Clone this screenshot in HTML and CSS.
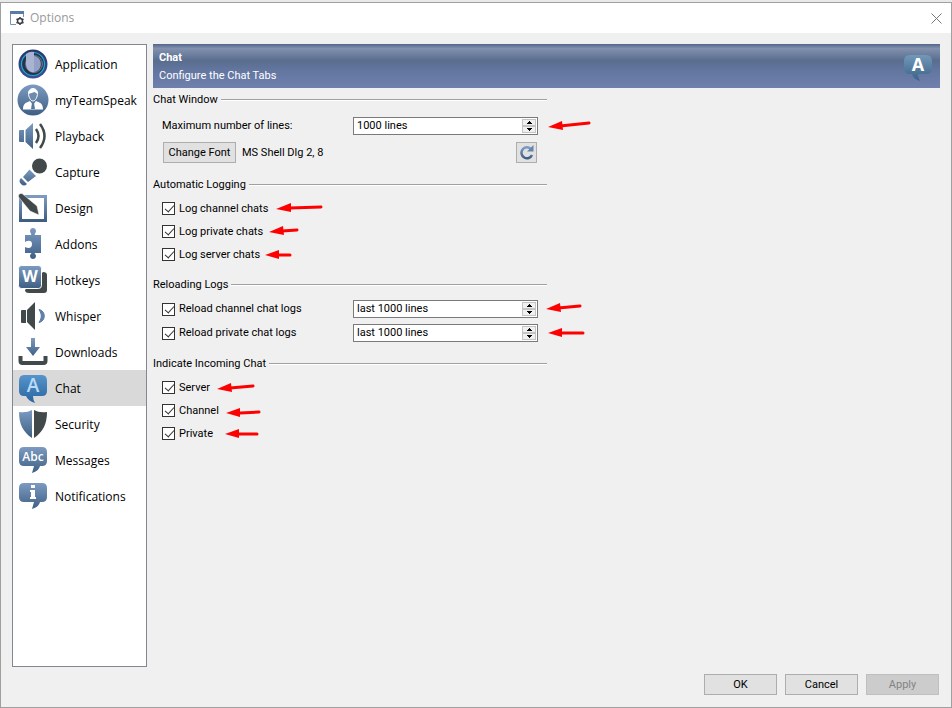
FILE: index.html
```html
<!DOCTYPE html>
<html lang="en">
<head>
<meta charset="utf-8">
<title>Options</title>
<link rel="stylesheet" href="styles.css">
</head>
<body>
<svg class="defs" width="0" height="0" aria-hidden="true">
  <defs>
    <linearGradient id="steel" x1="0" y1="0" x2="0" y2="1"><stop offset="0" stop-color="#7d9bc2"/><stop offset="1" stop-color="#3e5f83"/></linearGradient>
    <linearGradient id="blue" x1="0" y1="0" x2="0" y2="1"><stop offset="0" stop-color="#5794cb"/><stop offset="1" stop-color="#28659f"/></linearGradient>
    <linearGradient id="teal" x1="0" y1="0" x2="0" y2="1"><stop offset="0" stop-color="#7298b9"/><stop offset="1" stop-color="#3a6286"/></linearGradient>
    <linearGradient id="orb" x1="0" y1="0" x2="0" y2="1"><stop offset="0" stop-color="#27376a"/><stop offset="1" stop-color="#3c4f98"/></linearGradient>
    <symbol id="spin-up" viewBox="0 0 5 3"><path d="M2 0h1v1h1v1h1v1H0V2h1V1h1z"/></symbol>
    <symbol id="spin-down" viewBox="0 0 5 3"><path d="M0 0h5v1H4v1H3v1H2V2H1V1H0z"/></symbol>
  </defs>
</svg>
<div class="window">
  <header class="titlebar">
    <svg class="app-icon" width="15" height="15" viewBox="0 0 15 15">
      <path d="M.5 2v11.500H6M13.500 2v4" fill="none" stroke="#7893b0"/><path d="M0 0h14v3H0z" fill="#587ca3"/>
      <circle cx="10" cy="10" r="2.500" fill="none" stroke="#3b4146" stroke-width="1.500"/>
      <path d="M10 6v1.500M10 12.500V14M6.500 8l1.500.8M12 11.200l1.500.8M6.500 12l1.500-.8M12 8.800l1.500-.8" stroke="#3b4146" stroke-width="1.500"/>
    </svg>
    <h1 class="title">Options</h1>
    <button class="close" type="button" aria-label="Close"><svg width="11" height="11" viewBox="0 0 11 11"><path d="M.5.5l10 10M10.500.5l-10 10" stroke="#777" fill="none"/></svg></button>
  </header>
  <div class="body">
    <nav class="sidebar">
      <a class="item" href="#application"><svg viewBox="0 0 32 32"><circle cx="16" cy="16" r="14.500" fill="url(#orb)"/><circle cx="16" cy="16" r="11.500" fill="#26324f" stroke="#1bb0cb" stroke-width="1.200"/><circle cx="17" cy="16" r="8.500" fill="#3a4a68" stroke="#66788f"/><path d="M9 6q4-3 8-2v20c-3 1-8-2-8-8z" fill="#a9b3d4"/><path d="M17 8c9 1 9 15 0 16z" fill="#949fc6"/></svg>Application</a>
      <a class="item" href="#myteamspeak"><svg viewBox="0 0 32 32"><circle cx="16" cy="16" r="15.500" fill="url(#steel)"/><path d="M6 25.500c0-5.500 2-6.500 7-8.500l3 4 3-4c5 2 7 3 7 8.500z" fill="#fff"/><path d="M11.500 9c0-6 9-6 9 0 0 4-2 8-4.500 8s-4.500-4-4.500-8z" fill="#6e8bad" stroke="#fff"/><path d="M11.500 10c0-7 9-7 9 0-2-1-2-2-3-2-2 1-4 1-6 2z" fill="#fff"/><path d="M15 19h2l1 6h-4z" fill="#587899"/></svg>myTeamSpeak</a>
      <a class="item" href="#playback"><svg viewBox="0 0 32 32"><path d="M3 10h4v12H3q-1 0-1-1V11q0-1 1-1zM8.500 10L16 3v26l-7.500-7z" fill="url(#steel)"/><path d="M19 9q5 7 0 14M23 4q9 12 0 24" fill="none" stroke="#42494b" stroke-width="2.500"/></svg>Playback</a>
      <a class="item" href="#capture"><svg viewBox="0 0 32 32"><circle cx="22.500" cy="10" r="7.500" fill="#42494b"/><path d="M12.500 13.500l6.500 6.500-8 6-5-5zM4 22l6 6q-3 3-6 0-3-3 0-6z" fill="url(#steel)"/></svg>Capture</a>
      <a class="item" href="#design"><svg viewBox="0 0 32 32"><path d="M3.500 4.500h25v24h-25z" fill="#fff" stroke="url(#steel)" stroke-width="3"/><path d="M1.500 5Q1 1 5 1.500L20 14l2 9-9-4z" fill="#42494b" stroke="#fff" stroke-width=".5"/></svg>Design</a>
      <a class="item" href="#addons"><svg viewBox="0 0 32 32"><path d="M8 7h6c1-1-1-2-1-4 0-4 6-4 6 0 0 2-2 3-1 4h6v18h-6c-1 1 1 1 1 3 0 4-6 4-6 0 0-2 2-2 1-3H8v-6c4 2 7 1 7-3s-4-4-7-2z" fill="url(#steel)"/></svg>Addons</a>
      <a class="item" href="#hotkeys"><svg viewBox="0 0 32 32"><path d="M26 8q4 0 4 3v15q0 3-3 3H12q-4 0-4-3z" fill="#42494b"/><rect x="1.500" y="1.500" width="23" height="23" rx="3" fill="url(#steel)" stroke="#fff"/><text x="13" y="18" class="glyph bold" font-size="16">W</text></svg>Hotkeys</a>
      <a class="item" href="#whisper"><svg viewBox="0 0 32 32"><path d="M5 10h4v13H5q-1 0-1-1V11q0-1 1-1zM10 10l8-8v28l-8-8z" fill="#42494b"/><path d="M22 9.500c7 1 7 12 0 13 3-5 3-8 0-13z" fill="#5f80aa" stroke="#5f80aa"/></svg>Whisper</a>
      <a class="item" href="#downloads"><svg viewBox="0 0 32 32"><path d="M14 2h4v9h5l-7 9-7-9h5z" fill="url(#steel)"/><path d="M3.500 20v5q0 2 2 2h21q2 0 2-2v-5" fill="none" stroke="#42494b" stroke-width="4"/></svg>Downloads</a>
      <a class="item selected" href="#chat" aria-current="page"><svg viewBox="0 0 32 32"><path d="M7 3h18q5 0 5 6v10q0 5-5 5h-9q0 4 2 7-7-2-9-7H7q-5 0-5-5V9q0-6 5-6z" fill="url(#blue)"/><text x="16" y="20" class="glyph pale" font-size="19">A</text></svg>Chat</a>
      <a class="item" href="#security"><svg viewBox="0 0 32 32"><path d="M15 2v28C6 24 2 16 2 4q8 1 13-2z" fill="url(#steel)"/><path d="M17 2v28c9-6 13-14 13-26q-8 1-13-2z" fill="#42494b"/></svg>Security</a>
      <a class="item" href="#messages"><svg viewBox="0 0 32 32"><path d="M7 3h18q5 0 5 5v9q0 5-5 5h-2q-1 5-8 7l2-7H7q-5 0-5-5V8q0-5 5-5z" fill="url(#steel)"/><text x="16" y="17" class="glyph" font-size="12">Abc</text></svg>Messages</a>
      <a class="item" href="#notifications"><svg viewBox="0 0 32 32"><path d="M7 3h18q5 0 5 5v9q0 5-5 5h-2q-1 5-8 7l2-7H7q-5 0-5-5V8q0-5 5-5z" fill="url(#steel)"/><path d="M14 5h4v3h-4zM13 10h5v7h1v2h-6v-2h1v-5h-1z" fill="#fff"/></svg>Notifications</a>
    </nav>
    <main class="content">
      <div class="banner">
        <div><h2>Chat</h2><p>Configure the Chat Tabs</p></div>
        <svg width="32" height="32" viewBox="0 0 32 32"><path d="M8 4h16q6 0 6 6v7q0 6-6 6h-8q0 4 2 7-7-2-8-7H8q-6 0-6-6v-7q0-6 6-6z" fill="url(#teal)"/><text x="16" y="20" class="glyph bold" font-size="18">A</text></svg>
      </div>
      <form class="settings">
        <section class="group roomy">
          <h3>Chat Window</h3>
          <div class="row"><label class="name" for="max-lines">Maximum number of lines:</label>
            <span class="spin"><input id="max-lines" type="text" value="1000 lines"><span class="steps"><button type="button" aria-label="Increase"><svg width="5" height="3"><use href="#spin-up"/></svg></button><button type="button" aria-label="Decrease"><svg width="5" height="3"><use href="#spin-down"/></svg></button></span></span></div>
          <div class="row"><button class="font-button" type="button">Change Font</button><span class="font-name">MS Shell Dlg 2, 8</span>
            <button class="reset" type="button" aria-label="Reset font"><svg width="15" height="15" viewBox="0 0 15 15"><path d="M11.500 3.500A5.500 5.500 0 1 0 13 10" fill="none" stroke="url(#steel)" stroke-width="2.500"/><path d="M14.500 0v6.500H8z" fill="#6485ad"/></svg></button></div>
        </section>
        <section class="group">
          <h3>Automatic Logging</h3>
          <div class="row"><label><input type="checkbox" checked>Log channel chats</label></div>
          <div class="row"><label><input type="checkbox" checked>Log private chats</label></div>
          <div class="row"><label><input type="checkbox" checked>Log server chats</label></div>
        </section>
        <section class="group medium">
          <h3>Reloading Logs</h3>
          <div class="row"><label><input type="checkbox" checked>Reload channel chat logs</label>
            <span class="spin"><input type="text" value="last 1000 lines" aria-label="Channel chat lines"><span class="steps"><button type="button" aria-label="Increase"><svg width="5" height="3"><use href="#spin-up"/></svg></button><button type="button" aria-label="Decrease"><svg width="5" height="3"><use href="#spin-down"/></svg></button></span></span></div>
          <div class="row"><label><input type="checkbox" checked>Reload private chat logs</label>
            <span class="spin"><input type="text" value="last 1000 lines" aria-label="Private chat lines"><span class="steps"><button type="button" aria-label="Increase"><svg width="5" height="3"><use href="#spin-up"/></svg></button><button type="button" aria-label="Decrease"><svg width="5" height="3"><use href="#spin-down"/></svg></button></span></span></div>
        </section>
        <section class="group">
          <h3>Indicate Incoming Chat</h3>
          <div class="row"><label><input type="checkbox" checked>Server</label></div>
          <div class="row"><label><input type="checkbox" checked>Channel</label></div>
          <div class="row"><label><input type="checkbox" checked>Private</label></div>
        </section>
        <svg class="arrows" width="450" height="360" viewBox="150 88 450 360" aria-hidden="true">
          <g stroke="#f00" stroke-width="3" stroke-linecap="round">
            <path d="M560 126l29-3M290 208l31-1M282 231l15-1M278 255h12M558 308l22-2M560 333h23M230 388l23-2M240 413l19-1M238 434h19"/>
          </g>
          <g fill="#f00">
            <path d="M548 127l14-6 1 9zM276 209l15-6v9zM269 232l14-6 1 9zM265 255l14-5v9zM546 309l14-6 1 9zM548 333l14-5v9zM217 389l14-6 1 9zM226 413l14-5v9zM225 434l14-5v9z"/>
          </g>
        </svg>
      </form>
    </main>
  </div>
  <footer class="actions">
    <button type="button">OK</button>
    <button type="button">Cancel</button>
    <button type="button" disabled>Apply</button>
  </footer>
</div>
</body>
</html>
```
FILE: styles.css
```css
*, *::before, *::after { box-sizing: border-box; }

body {
  margin: 0;
  padding: 2px 0 0;
  min-height: 100vh;
  display: flex;
  background: #e9e9e9;
  color: #000;
  font: 11px/16px Roboto, Tahoma, sans-serif;
}

h1, h2, h3, p { margin: 0; font: inherit; }
button, input { font: inherit; color: inherit; }
svg { display: block; flex: none; }
.defs { position: absolute; }

.glyph { fill: #fff; text-anchor: middle; font-family: "Open Sans", sans-serif; font-weight: 600; }
.bold { font-weight: 700; }
.pale { fill: #b8dcf8; }

.window {
  flex: 1;
  display: flex;
  flex-direction: column;
  background: #f0f0f0;
  border: 1px solid #a0a0a0;
}

.titlebar {
  display: flex;
  align-items: center;
  height: 30px;
  padding: 0 9px;
  background: #fff;
}
.title { margin-left: 5px; flex: 1; font: 12px/16px "Open Sans", sans-serif; color: #999; }
.close { padding: 0; border: 0; background: none; }

.body { flex: 1; display: flex; gap: 6px; padding: 11px 11px 0; }

.sidebar {
  width: 135px;
  flex: none;
  padding: 1px 0;
  background: #fff;
  border: 1px solid #828790;
}
.item {
  display: flex;
  align-items: center;
  gap: 6px;
  height: 36px;
  padding: 2px 0 0 4px;
  color: #000;
  text-decoration: none;
  font: 12px/16px "Open Sans", sans-serif;
}
.item svg { width: 32px; height: 32px; margin-top: -2px; }
.selected { background: #d9d9d9; }

.content { flex: 1; min-width: 0; }
.banner {
  display: flex;
  align-items: center;
  justify-content: space-between;
  height: 44px;
  padding: 2px 6px 0;
  color: #fff;
  line-height: 18px;
  background: linear-gradient(#53658b, #8191ae 10%, #5a6d8f 38%, #6276a0 60%, #7080ad);
}
.banner h2 { font-weight: 700; }

.settings { position: relative; max-width: 394px; padding-top: 4px; }
.group { margin-bottom: 11px; }
.group h3 { display: flex; align-items: center; gap: 3px; margin-bottom: 4px; }
.group h3::after { content: ""; flex: 1; height: 2px; background: #a0a0a0; border-bottom: 1px solid #fff; }

.row { display: flex; align-items: center; height: 23px; padding: 0 9px; }
.medium .row { height: 24px; }
.roomy .row { height: 27px; }
.row label { display: flex; align-items: center; gap: 4px; }

input[type="checkbox"] {
  appearance: none;
  width: 13px;
  height: 13px;
  margin: 0;
  border: 1px solid #333;
  background: #fff;
  position: relative;
}
input[type="checkbox"]:checked::after {
  content: "";
  position: absolute;
  left: 4px;
  top: 0;
  width: 5px;
  height: 9px;
  border: solid #333;
  border-width: 0 1px 1px 0;
  transform: rotate(42deg);
}

.spin {
  display: flex;
  width: 185px;
  height: 18px;
  margin-left: auto;
  padding: 1px;
  background: #fff;
  border: 1px solid #7a7a7a;
}
.spin input { flex: 1; min-width: 0; padding: 0 2px; border: 0; background: none; outline: 0; }
.steps { display: flex; flex-direction: column; width: 14px; }
.steps button {
  flex: 1;
  display: flex;
  align-items: center;
  justify-content: center;
  padding: 0;
  background: #f0f0f0;
  border: 1px solid #c4c4c4;
}

.font-button, .reset, .actions button {
  height: 21px;
  padding: 0;
  background: #e1e1e1;
  border: 1px solid #adadad;
}
.font-button { width: 73px; margin: 0 6px 0 1px; }
.reset { width: 21px; margin: 0 1px 0 auto; display: flex; align-items: center; justify-content: center; }

.arrows { position: absolute; left: -3px; top: 0; pointer-events: none; }

.actions { display: flex; justify-content: flex-end; gap: 8px; padding: 7px 12px 12px; }
.actions button { width: 73px; }
.actions button:disabled { background: #ccc; border-color: #bfbfbf; color: #838383; }
```
